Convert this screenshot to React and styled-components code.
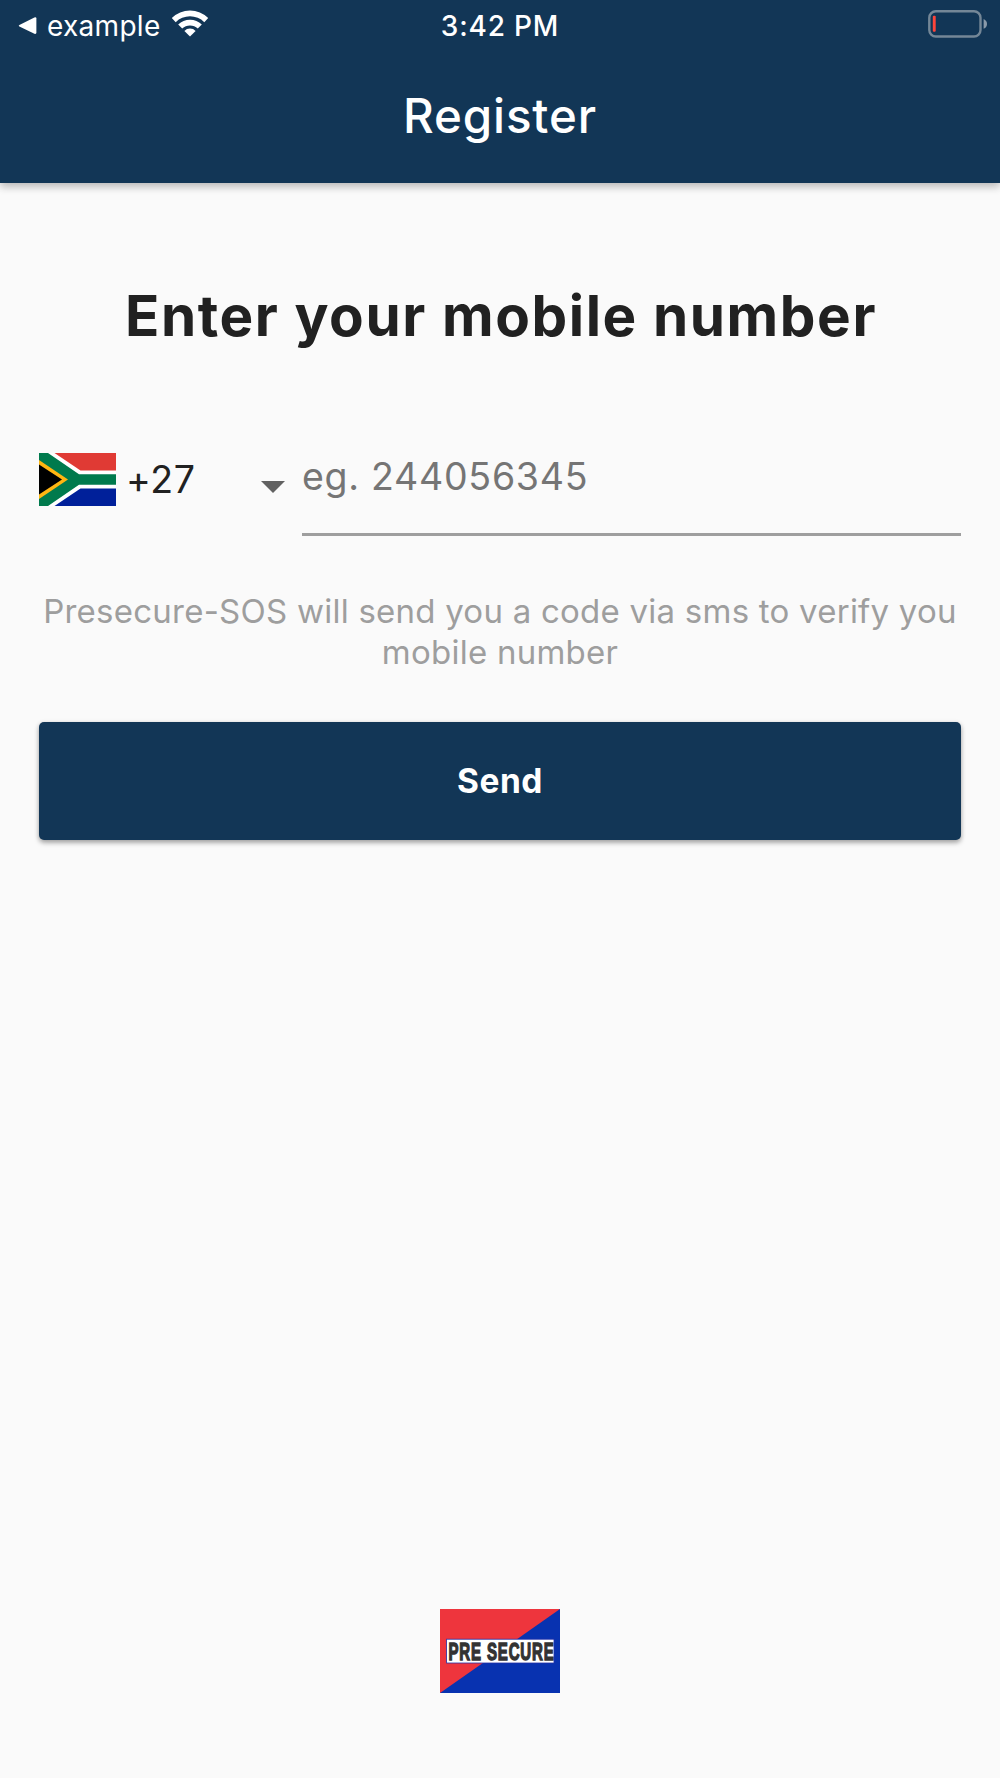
import { useState } from "react";
import styled, { createGlobalStyle } from "styled-components";

export default function App() {

    const [country] = useState({ name: "South Africa", code: "+27" });

    return (
        <>
            <GlobalStyle />
            <Screen>
                <Header>
                    <StatusBar>
                        <Left>
                            <BackIcon />
                            <BackApp>example</BackApp>
                            <WifiIcon />
                        </Left>
                        <Time>3:42 PM</Time>
                        <Right>
                            <BatteryIcon />
                        </Right>
                    </StatusBar>
                    <Tittle>Register</Tittle>
                </Header>
                <Content>
                    <Question>Enter your mobile number</Question>
                    <PhoneRow>
                        <Country title={country.name}>
                            <Flag />
                            <Code>{country.code}</Code>
                            <Arrow />
                        </Country>
                        <Field>
                            <Hint>eg. 244056345</Hint>
                        </Field>
                    </PhoneRow>
                    <Info>Presecure-SOS will send you a code via sms to verify you mobile number</Info>
                    <Button type="button">Send</Button>
                </Content>
                <Footer>
                    <Logo />
                </Footer>
            </Screen>
        </>
    );
}

function BackIcon() {
    return (
        <svg width="20" height="20" viewBox="0 0 20 20">
            <path d="M1.4 9 L16.4 1.4 Q18.4 0.8 18.4 2.6 V16.6 Q18.4 18.4 16.4 17.8 L1.4 10.6 Q0 9.8 1.4 9 Z" fill="#fff" />
        </svg>
    );
}

function WifiIcon() {
    return (
        <svg width="38" height="28" viewBox="0 0 38 28">
            <path d="M0.8 8 A26 26 0 0 1 37.2 8 L33.3 12.2 A20.4 20.4 0 0 0 4.7 12.2 Z" fill="#fff" />
            <path d="M7.2 14.6 A16.8 16.8 0 0 1 30.8 14.6 L26.8 18.6 A11.2 11.2 0 0 0 11.2 18.6 Z" fill="#fff" />
            <path d="M13.4 20.9 A8 8 0 0 1 24.6 20.9 L19 26.6 Z" fill="#fff" />
        </svg>
    );
}

function BatteryIcon() {
    return (
        <svg width="59" height="28" viewBox="0 0 59 28">
            <rect x="1.3" y="1.3" width="51.2" height="25.2" rx="6.5" fill="none" stroke="#748797" strokeWidth="2.4" />
            <rect x="4.8" y="5.8" width="2.9" height="16" rx="1" fill="#ff453a" />
            <path d="M55.6 9 Q59 10.6 59 13.9 Q59 17.2 55.6 18.8 Z" fill="#8a9aa9" />
        </svg>
    );
}

function Flag() {
    return (
        <svg width="77" height="53" viewBox="0 0 77 53">
            <rect width="77" height="53" fill="#fff" />
            <path d="M15.5 0 H77 V17.6 H41.5 Z" fill="#e03a34" />
            <path d="M15.5 53 H77 V35.4 H41.5 Z" fill="#00209a" />
            <path d="M0 0 H9 L40 21.3 H77 V31.7 H40 L9 53 H0 Z" fill="#007a4d" />
            <path d="M0 7 L29 26.5 L0 46 Z" fill="#ffb612" />
            <path d="M0 11.6 L23 26.5 L0 41.4 Z" fill="#000" />
        </svg>
    );
}

function Arrow() {
    return (
        <svg width="24" height="12" viewBox="0 0 24 12">
            <path d="M0 0 H24 L12 12 Z" fill="#616161" />
        </svg>
    );
}

function Logo() {
    return (
        <svg width="120" height="84" viewBox="0 0 120 84">
            <rect width="120" height="84" fill="#ee353d" />
            <path d="M120 0 V84 H0 Z" fill="#0832b0" />
            <rect x="6.6" y="30.2" width="107.4" height="23.8" fill="#fff" stroke="#2430a8" strokeWidth="0.8" />
            <text
                transform="translate(8.4 51) scale(0.625 1)"
                fontFamily="'Liberation Sans', sans-serif"
                fontWeight="700"
                fontSize="24"
                letterSpacing="1.4"
                fill="#333"
                stroke="#333"
                strokeWidth="1.4"
            >PRE SECURE</text>
        </svg>
    );
}

const GlobalStyle = createGlobalStyle`
    *{
        box-sizing: border-box;
    }
    body{
        margin: 0;
        background: #FAFAFA;
        font-family: Inter, Roboto, sans-serif;
    }
    svg{
        display: block;
        flex-shrink: 0;
    }
`;
const Screen = styled.div`
    width: 100%;
    height: 1778px;
    display: flex;
    flex-direction: column;
    background: #FAFAFA;
`;
const Header = styled.header`
    height: 183px;
    background: #123656;
    color: #FFFFFF;
    box-shadow: 0 4px 8px rgba(0, 0, 0, 0.2), 0 1px 10px rgba(0, 0, 0, 0.1);
`;
const StatusBar = styled.div`
    height: 51px;
    display: grid;
    grid-template-columns: 1fr auto 1fr;
    align-items: center;
    padding: 0 13px;
`;
const Left = styled.div`
    display: flex;
    align-items: center;
    padding-left: 5px;
    svg:last-child{
        margin-left: 10px;
        margin-top: -3px;
    }
`;
const BackApp = styled.span`
    margin-left: 9px;
    font-size: 28px;
    line-height: 34px;
    letter-spacing: 0.3px;
`;
const Time = styled.span`
    font-weight: 500;
    font-size: 28px;
    line-height: 34px;
    letter-spacing: 0.8px;
`;
const Right = styled.div`
    display: flex;
    justify-content: flex-end;
    padding-bottom: 3px;
`;
const Tittle = styled.h1`
    margin: 0;
    padding-top: 36px;
    font-weight: 500;
    font-size: 47.5px;
    line-height: 58px;
    letter-spacing: 0.85px;
    text-align: center;
`;
const Content = styled.main`
    flex: 1;
    display: flex;
    flex-direction: column;
    padding: 99px 39px 0;
`;
const Question = styled.h2`
    margin: 0;
    padding-left: 2px;
    font-weight: 700;
    font-size: 56.6px;
    line-height: 68px;
    letter-spacing: 1.6px;
    text-align: center;
    color: #212121;
`;
const PhoneRow = styled.div`
    height: 88px;
    display: flex;
    margin-top: 98px;
`;
const Country = styled.div`
    width: 263px;
    height: 63px;
    display: flex;
    align-items: center;
    padding-right: 17px;
    svg:last-child{
        margin-left: auto;
        margin-top: 14px;
    }
`;
const Code = styled.span`
    margin-left: 10px;
    font-size: 37.5px;
    line-height: 46px;
    letter-spacing: 0.7px;
    color: #212121;
`;
const Field = styled.div`
    flex: 1;
    border-bottom: 3px solid #9E9E9E;
`;
const Hint = styled.span`
    display: block;
    padding-top: 6px;
    font-size: 37.5px;
    line-height: 46px;
    letter-spacing: 0.72px;
    color: #757575;
`;
const Info = styled.p`
    margin: 55px 0 0;
    font-size: 33px;
    line-height: 41px;
    letter-spacing: 0.24px;
    text-align: center;
    color: #9E9E9E;
`;
const Button = styled.button`
    height: 118px;
    margin-top: 49px;
    padding-bottom: 2px;
    border: none;
    border-radius: 5px;
    background: #123656;
    color: #FFFFFF;
    font-family: inherit;
    font-weight: 700;
    font-size: 33.5px;
    letter-spacing: 0.5px;
    box-shadow: 0 3px 5px rgba(0, 0, 0, 0.28), 0 1px 5px rgba(0, 0, 0, 0.14);
    &:hover{
        cursor: pointer;
    }
`;
const Footer = styled.footer`
    display: flex;
    justify-content: center;
    padding-bottom: 85px;
`;
